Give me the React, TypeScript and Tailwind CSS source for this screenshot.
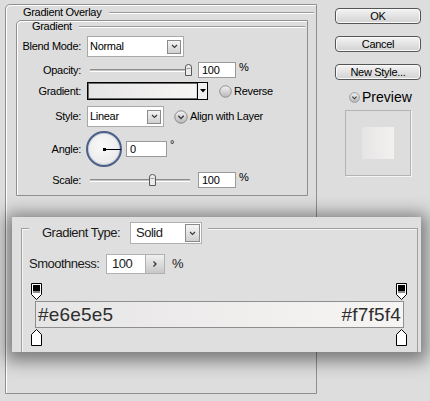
import React from 'react';

const Chevron = () => (
  <svg width="7" height="5" viewBox="0 0 7 5">
    <path d="M1 1 L3.5 3.5 L6 1" stroke="#3a3a3a" strokeWidth="1.2" fill="none" />
  </svg>
);

const Select = ({ text, w, h, big }: { text: string; w: string; h: string; big?: boolean }) => (
  <div className={`${w} ${h} flex items-center bg-white border border-[#a9a9a9] ${big ? 'pl-[5px]' : 'pl-[2px]'} pr-[2px]`}>
    <span className="flex-1">{text}</span>
    <div
      className={`${big ? 'w-[14px] h-[17px]' : 'w-[14px] h-[14px]'} flex items-center justify-center border border-[#8a8a8a] bg-[linear-gradient(to_bottom,#f4f4f4,#d0d0d0)]`}
    >
      <Chevron />
    </div>
  </div>
);

const Slider = ({ thumb }: { thumb: string }) => (
  <div className="relative w-[102px] h-[16px] flex items-center">
    <div className="w-[100px] h-[3px] border-t border-[#8c8c8c] border-b border-b-white bg-[#c4c4c4]" />
    <svg className={`absolute ${thumb} top-[2px]`} width="7" height="12" viewBox="0 0 7 12">
      <path d="M0.5 11.5 V3 Q0.5 0.5 3.5 0.5 Q6.5 0.5 6.5 3 V11.5 Z" fill="#ececec" stroke="#5a5a5a" />
      <path d="M1.5 4.5 H5.5" stroke="#9a9a9a" />
    </svg>
  </div>
);

const Input = ({ value, w }: { value: string; w: string }) => (
  <div className={`${w} h-[16px] bg-white border border-[#9a9a9a] pl-[3px] flex items-center`}>{value}</div>
);

const RoundCheck = ({ size, checked }: { size: number; checked?: boolean }) => (
  <svg width={size} height={size} viewBox="0 0 14 14">
    <defs>
      <linearGradient id={`rc${size}${checked ? 'c' : ''}`} x1="0" y1="0" x2="0" y2="1">
        <stop offset="0" stopColor="#f2f2f2" />
        <stop offset="1" stopColor="#b8b8b8" />
      </linearGradient>
    </defs>
    <circle cx="7" cy="7" r="6.2" fill={`url(#rc${size}${checked ? 'c' : ''})`} stroke="#8a8a8a" strokeWidth="1" />
    {checked && <path d="M4.3 5.8 L7 8.6 L9.7 5.8" stroke="#333" strokeWidth="1.3" fill="none" />}
  </svg>
);

const TopStop = () => (
  <svg width="11" height="17" viewBox="0 0 11 17">
    <path d="M0.5 0.5 H10.5 V11.5 L5.5 16.5 L0.5 11.5 Z" fill="#fff" stroke="#000" />
    <rect x="2" y="2" width="7" height="6" fill="#000" />
    <rect x="2" y="8" width="7" height="2" fill="#8a8a8a" />
  </svg>
);

const BottomStop = () => (
  <svg width="11" height="17" viewBox="0 0 11 17">
    <path d="M5.5 0.5 L10.5 5.5 V16.5 H0.5 V5.5 Z" fill="#fff" stroke="#000" />
  </svg>
);

const Button = ({ label }: { label: string }) => (
  <div className="w-[86px] h-[16px] rounded-[4px] border border-[#555] bg-[linear-gradient(to_bottom,#f4f4f4,#d2d2d2)] shadow-[inset_0_0_0_1px_#fafafa] flex items-center justify-center leading-[14px]">
    {label}
  </div>
);

const Label = ({ text }: { text: string }) => (
  <span className="w-[64px] text-right whitespace-nowrap">{text}</span>
);

export default function App() {
  return (
    <div className="relative w-[430px] h-[401px] overflow-hidden bg-[#dddddd] font-['Liberation_Sans',Arial,sans-serif] text-[11px] tracking-[-0.3px] text-black">
      <div className="flex pt-[4px] pl-[5px]">
        {/* Gradient Overlay group */}
        <div className="w-[312px] h-[390px] border border-[#8f8f8f] rounded-tl-[5px] shadow-[inset_1px_1px_0_#fff] pt-[1px]">
          <div className="flex items-center h-[12px] pl-[17px] pr-[2px]">
            <span className="leading-[12px] whitespace-nowrap">Gradient Overlay</span>
            <div className="flex-1 ml-[8px] h-px bg-[#9a9a9a] shadow-[0_1px_0_#fff]" />
          </div>

          {/* Gradient inner group */}
          <div className="ml-[10px] mt-[2px] w-[292px] h-[176px] border border-[#8f8f8f] rounded-tl-[5px] shadow-[inset_1px_1px_0_#fff]">
            <div className="flex items-center h-[11px] pl-[15px] pr-[2px]">
              <span className="leading-[11px] whitespace-nowrap">Gradient</span>
              <div className="flex-1 ml-[7px] h-px bg-[#9a9a9a] shadow-[0_1px_0_#fff]" />
            </div>

            <div className="flex items-center mt-[4px] h-[21px]">
              <Label text="Blend Mode:" />
              <div className="ml-[6px]">
                <Select text="Normal" w="w-[97px]" h="h-[21px]" />
              </div>
            </div>

            <div className="flex items-center mt-[5px] h-[16px]">
              <Label text="Opacity:" />
              <div className="ml-[9px]">
                <Slider thumb="left-[95px]" />
              </div>
              <div className="ml-[6px]">
                <Input value="100" w="w-[38px]" />
              </div>
              <span className="ml-[3px] self-start leading-[11px]">%</span>
            </div>

            <div className="flex items-center mt-[4px] h-[18px]">
              <Label text="Gradient:" />
              <div className="ml-[6px] w-[121px] h-[18px] border border-black shadow-[inset_0_0_0_1px_#6a6a6a] flex">
                <div className="flex-1 m-[1px] bg-[linear-gradient(to_right,#e6e5e5,#f7f5f4)]" />
                <div className="w-[10px] border-l border-black flex items-center justify-center bg-[#f0f0f0]">
                  <svg width="6" height="4" viewBox="0 0 6 4">
                    <path d="M0 0 H6 L3 3.5 Z" fill="#000" />
                  </svg>
                </div>
              </div>
              <div className="ml-[11px] flex items-center">
                <RoundCheck size={13} />
              </div>
              <span className="ml-[2px] whitespace-nowrap">Reverse</span>
            </div>

            <div className="flex items-center mt-[6px] h-[21px]">
              <Label text="Style:" />
              <div className="ml-[6px]">
                <Select text="Linear" w="w-[77px]" h="h-[21px]" />
              </div>
              <div className="ml-[10px] flex items-center">
                <RoundCheck size={14} checked />
              </div>
              <span className="ml-[2px] whitespace-nowrap">Align with Layer</span>
            </div>

            <div className="flex items-center mt-[4px] h-[36px]">
              <Label text="Angle:" />
              <div className="ml-[5px] relative w-[36px] h-[36px] rounded-full border-2 border-[#4c5f88] bg-[radial-gradient(circle_at_45%_40%,#fafafa,#e4e4e4)] shadow-[inset_0_0_0_1px_#c8ccd6]">
                <div className="absolute left-[15px] top-[15px] w-[3px] h-[3px] bg-black" />
                <div className="absolute left-[16px] top-[16px] w-[17px] h-px bg-black" />
              </div>
              <div className="ml-[4px]">
                <Input value="0" w="w-[41px]" />
              </div>
              <span className="ml-[3px] self-start mt-[9px] leading-[8px]">°</span>
            </div>

            <div className="flex items-center mt-[5px] h-[16px]">
              <Label text="Scale:" />
              <div className="ml-[9px]">
                <Slider thumb="left-[59px]" />
              </div>
              <div className="ml-[6px]">
                <Input value="100" w="w-[38px]" />
              </div>
              <span className="ml-[3px] self-start leading-[11px]">%</span>
            </div>
          </div>
        </div>

        {/* right column */}
        <div className="ml-[18px] mt-[4px] flex flex-col">
          <Button label="OK" />
          <div className="mt-[12px]">
            <Button label="Cancel" />
          </div>
          <div className="mt-[12px]">
            <Button label="New Style..." />
          </div>
          <div className="mt-[11px] ml-[14px] flex items-center h-[12px]">
            <RoundCheck size={11} checked />
            <span className="ml-[2px] text-[14px] tracking-normal leading-[12px]">Preview</span>
          </div>
          <div className="mt-[7px] ml-[10px] w-[66px] h-[66px] border border-[#b4b4b4] shadow-[1px_1px_0_#f4f4f4] flex items-center justify-center">
            <div className="w-[32px] h-[32px] bg-[linear-gradient(to_right,#e6e5e5,#f3f1f0)]" />
          </div>
        </div>
      </div>

      {/* magnified overlay panel */}
      <div className="absolute left-[12px] top-[217px] w-[409px] h-[135px] overflow-hidden bg-[#dfdfdf] shadow-[0_3px_16px_6px_rgba(0,0,0,0.45)] text-[13px] tracking-[-0.5px] text-[#1a1a1a]">
        <div className="ml-[9px] mt-[11px] w-[397px] h-[140px] border-l border-r border-[#a0a0a0] shadow-[inset_1px_0_0_#f4f4f4]">
          <div className="flex items-start h-[16px]">
            <div className="w-[7px] h-px bg-[#a0a0a0] shadow-[0_1px_0_#f4f4f4]" />
            <div className="-mt-[6px] h-[22px] flex items-center pl-[13px] pr-[6px]">
              <span className="w-[81px] whitespace-nowrap">Gradient Type:</span>
              <div className="ml-[7px] w-[72px] h-[22px] bg-white border border-[#b0b0b0] flex items-center pl-[5px] pr-[1px]">
                <span className="flex-1">Solid</span>
                <div className="w-[15px] h-[18px] flex items-center justify-center border border-[#8a8a8a] bg-[linear-gradient(to_bottom,#f6f6f6,#cfcfcf)]">
                  <Chevron />
                </div>
              </div>
            </div>
            <div className="flex-1 h-px bg-[#a0a0a0] shadow-[0_1px_0_#f4f4f4]" />
          </div>

          <div className="flex items-center mt-[10px] h-[20px] pl-[7px]">
            <span className="w-[77px] whitespace-nowrap">Smoothness:</span>
            <div className="w-[40px] h-[20px] bg-white border border-[#b0b0b0] pl-[5px] flex items-center">100</div>
            <div className="w-[19px] h-[20px] border border-l-0 border-[#b0b0b0] bg-[linear-gradient(to_bottom,#f0f0f0,#c8c8c8)] flex items-center justify-center">
              <svg width="4" height="6" viewBox="0 0 4 6">
                <path d="M0.5 0.5 L3 3 L0.5 5.5" stroke="#333" strokeWidth="1.3" fill="none" />
              </svg>
            </div>
            <span className="ml-[7px]">%</span>
          </div>

          <div className="mt-[9px] ml-[9px] w-[376px] flex justify-between">
            <TopStop />
            <TopStop />
          </div>

          <div className="mt-[1px] ml-[13px] w-[369px] h-[27px] border border-[#8e8e8e] bg-[linear-gradient(to_right,#e6e5e5,#f7f5f4)] flex items-center justify-between px-[2px] text-[19px] leading-none tracking-[0.2px] text-[#2e2e2e]">
            <span>#e6e5e5</span>
            <span>#f7f5f4</span>
          </div>

          <div className="mt-[1px] ml-[9px] w-[376px] flex justify-between">
            <BottomStop />
            <BottomStop />
          </div>
        </div>
      </div>
    </div>
  );
}
